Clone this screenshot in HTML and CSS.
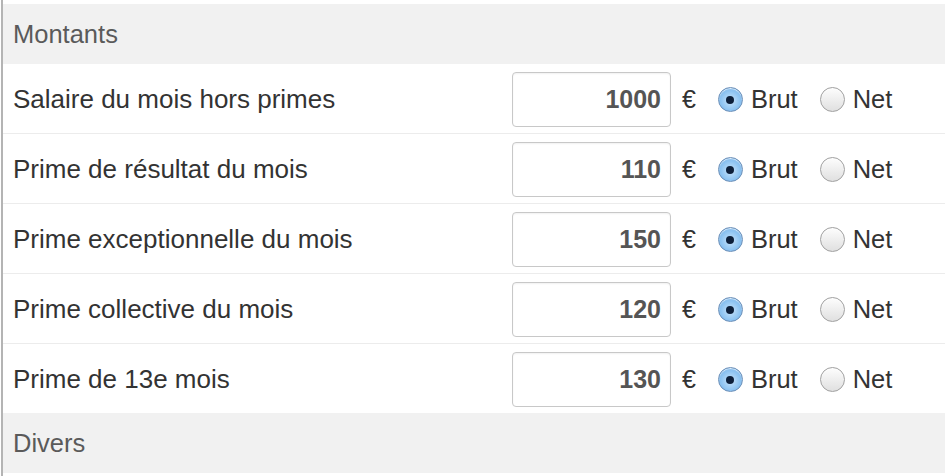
FILE: index.html
```html
<!DOCTYPE html>
<html lang="fr">
<head>
<meta charset="utf-8">
<title>Montants</title>
<link rel="stylesheet" href="styles.css">
</head>
<body>
<div class="panel">
  <div class="section-head">Montants</div>
  <div class="row">
    <label class="label">Salaire du mois hors primes</label>
    <div class="controls">
      <input class="amount" type="text" value="1000">
      <span class="cur">€</span>
      <label class="opt"><input type="radio" name="r1" checked><span>Brut</span></label>
      <label class="opt"><input type="radio" name="r1"><span>Net</span></label>
    </div>
  </div>
  <div class="row">
    <label class="label">Prime de résultat du mois</label>
    <div class="controls">
      <input class="amount" type="text" value="110">
      <span class="cur">€</span>
      <label class="opt"><input type="radio" name="r2" checked><span>Brut</span></label>
      <label class="opt"><input type="radio" name="r2"><span>Net</span></label>
    </div>
  </div>
  <div class="row">
    <label class="label">Prime exceptionnelle du mois</label>
    <div class="controls">
      <input class="amount" type="text" value="150">
      <span class="cur">€</span>
      <label class="opt"><input type="radio" name="r3" checked><span>Brut</span></label>
      <label class="opt"><input type="radio" name="r3"><span>Net</span></label>
    </div>
  </div>
  <div class="row">
    <label class="label">Prime collective du mois</label>
    <div class="controls">
      <input class="amount" type="text" value="120">
      <span class="cur">€</span>
      <label class="opt"><input type="radio" name="r4" checked><span>Brut</span></label>
      <label class="opt"><input type="radio" name="r4"><span>Net</span></label>
    </div>
  </div>
  <div class="row last">
    <label class="label">Prime de 13e mois</label>
    <div class="controls">
      <input class="amount" type="text" value="130">
      <span class="cur">€</span>
      <label class="opt"><input type="radio" name="r5" checked><span>Brut</span></label>
      <label class="opt"><input type="radio" name="r5"><span>Net</span></label>
    </div>
  </div>
  <div class="section-head">Divers</div>
</div>
</body>
</html>
```
FILE: styles.css
```css
html, body {
  margin: 0;
  padding: 0;
  background: #fff;
}
body {
  font-family: "Liberation Sans", Arial, sans-serif;
  color: #333;
}
.panel {
  margin-left: 1px;
  border-left: 2px solid #b4b4b4;
  padding-top: 4px;
  min-height: 472px;
}
.section-head {
  height: 60px;
  background: #f1f1f1;
  color: #5a5a5a;
  font-size: 25.5px;
  display: flex;
  align-items: center;
  padding-left: 10px;
}
.row {
  display: grid;
  grid-template-columns: 499px auto;
  align-items: center;
  padding: 8px 0 6px 10px;
  border-bottom: 1px solid #ececec;
}
.row.last {
  border-bottom: 0;
  padding-bottom: 6px;
}
.label {
  font-size: 26px;
  color: #333;
}
.controls {
  display: flex;
  align-items: center;
}
.amount {
  box-sizing: border-box;
  width: 159px;
  height: 55px;
  border: 1px solid #c8c8c8;
  border-radius: 4px;
  padding: 0 9px 0 6px;
  text-align: right;
  font-family: "Liberation Sans", Arial, sans-serif;
  font-size: 25px;
  font-weight: bold;
  color: #555;
  background: #fff;
  outline: none;
  box-shadow: inset 0 1px 2px rgba(0,0,0,0.06);
}
.cur {
  font-size: 25px;
  color: #333;
  margin-left: 11px;
  margin-right: 22px;
}
.opt {
  display: flex;
  align-items: center;
  font-size: 25.5px;
  color: #333;
}
.opt + .opt {
  margin-left: 22px;
}
.opt span {
  margin-left: 8px;
}
.opt input {
  -webkit-appearance: none;
  appearance: none;
  margin: 0;
  width: 25px;
  height: 25px;
  border-radius: 50%;
  border: 1px solid #a0a0a0;
  background: linear-gradient(#fdfdfd, #e0e0e0);
  box-shadow: inset 0 1px 1px rgba(255,255,255,0.8);
  box-sizing: border-box;
  position: relative;
}
.opt input:checked {
  border-color: #6b8fb8;
  background: radial-gradient(circle at 50% 55%, #c9e4fb 0, #8ec4f2 55%, #6aa8e2 100%);
}
.opt input:checked::after {
  content: "";
  position: absolute;
  left: 50%;
  top: 50%;
  width: 8px;
  height: 8px;
  margin: -4px 0 0 -4px;
  border-radius: 50%;
  background: #0d1f3a;
}
```
